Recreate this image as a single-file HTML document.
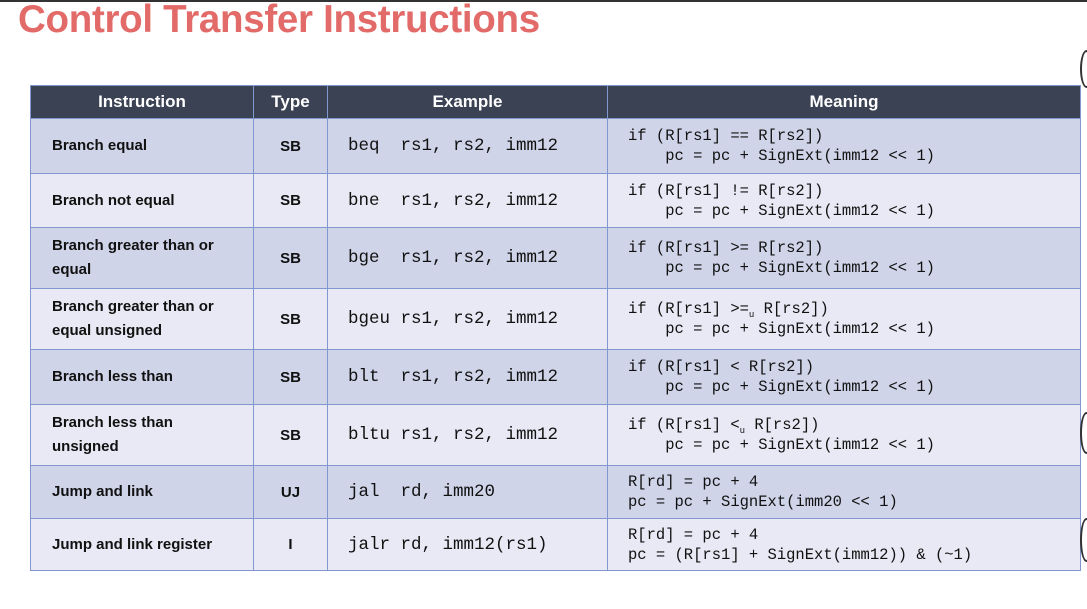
<!DOCTYPE html>
<html><head><meta charset="utf-8"><style>
body{margin:0;width:1087px;height:609px;background:#fff;position:relative;overflow:hidden;font-family:"Liberation Sans",sans-serif}
.topbar{position:absolute;left:0;top:0;width:1087px;height:2px;background:#333}
h1{position:absolute;left:18px;top:-2px;margin:0;font-size:38.5px;font-weight:bold;color:#e26a68;letter-spacing:-0.3px}
table{position:absolute;left:30px;top:85px;border-collapse:collapse;table-layout:fixed}
td,th{border:1.5px solid #8197cf;padding:0}
th{background:#3b4254;color:#fff;font-size:17px;height:32px;font-weight:bold}
td{font-size:15px;color:#111}
tr.a td{background:#d0d4e9}
tr.b td{background:#e8e9f4}
td.i{font-weight:bold;padding-left:21px;padding-right:30px;line-height:24px}
td.t{text-align:center;font-weight:bold}
td.e{font-family:"Liberation Mono",monospace;font-size:17.5px;padding-left:20px;white-space:pre}
td.m{font-family:"Liberation Mono",monospace;font-size:15.5px;padding-left:20px;white-space:pre;line-height:20px}
.u{font-size:9px;position:relative;top:4px;line-height:0}
.arc{position:absolute;right:-6px;width:9px;border:2px solid #333;border-radius:50%}
</style></head><body>
<div class="topbar"></div>
<h1>Control Transfer Instructions</h1>
<table>
<colgroup><col style="width:223px"><col style="width:74px"><col style="width:280px"><col style="width:473px"></colgroup>
<tr><th>Instruction</th><th>Type</th><th>Example</th><th>Meaning</th></tr>
<tr class="a" style="height:55px"><td class="i">Branch equal</td><td class="t">SB</td><td class="e">beq  rs1, rs2, imm12</td><td class="m">if (R[rs1] == R[rs2])
    pc = pc + SignExt(imm12 << 1)</td></tr>
<tr class="b" style="height:54px"><td class="i">Branch not equal</td><td class="t">SB</td><td class="e">bne  rs1, rs2, imm12</td><td class="m">if (R[rs1] != R[rs2])
    pc = pc + SignExt(imm12 << 1)</td></tr>
<tr class="a" style="height:61px"><td class="i">Branch greater than or equal</td><td class="t">SB</td><td class="e">bge  rs1, rs2, imm12</td><td class="m">if (R[rs1] >= R[rs2])
    pc = pc + SignExt(imm12 << 1)</td></tr>
<tr class="b" style="height:61px"><td class="i">Branch greater than or equal unsigned</td><td class="t">SB</td><td class="e">bgeu rs1, rs2, imm12</td><td class="m">if (R[rs1] >=<span class="u">u</span> R[rs2])
    pc = pc + SignExt(imm12 << 1)</td></tr>
<tr class="a" style="height:55px"><td class="i">Branch less than</td><td class="t">SB</td><td class="e">blt  rs1, rs2, imm12</td><td class="m">if (R[rs1] < R[rs2])
    pc = pc + SignExt(imm12 << 1)</td></tr>
<tr class="b" style="height:61px"><td class="i">Branch less than unsigned</td><td class="t">SB</td><td class="e">bltu rs1, rs2, imm12</td><td class="m">if (R[rs1] <<span class="u">u</span> R[rs2])
    pc = pc + SignExt(imm12 << 1)</td></tr>
<tr class="a" style="height:53px"><td class="i">Jump and link</td><td class="t">UJ</td><td class="e">jal  rd, imm20</td><td class="m">R[rd] = pc + 4
pc = pc + SignExt(imm20 << 1)</td></tr>
<tr class="b" style="height:52px"><td class="i">Jump and link register</td><td class="t">I</td><td class="e">jalr rd, imm12(rs1)</td><td class="m">R[rd] = pc + 4
pc = (R[rs1] + SignExt(imm12)) &amp; (~1)</td></tr>
</table>
<div class="arc" style="top:50px;height:34px"></div>
<div class="arc" style="top:412px;height:38px"></div>
<div class="arc" style="top:518px;height:40px"></div>
</body></html>
